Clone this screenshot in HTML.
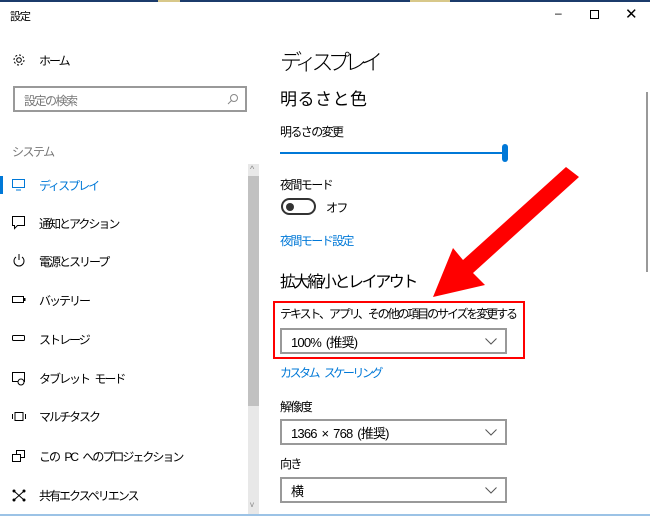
<!DOCTYPE html>
<html><head><meta charset="utf-8"><style>
*{margin:0;padding:0;box-sizing:border-box}
body{width:650px;height:516px;overflow:hidden;background:#fff;font-family:"Liberation Sans","Noto Sans CJK JP",sans-serif;color:#000;position:relative}
.a{position:absolute;white-space:nowrap}
.t{font-size:12px;letter-spacing:-1.6px;word-spacing:3px}
.nav{font-size:12px;left:39px;letter-spacing:-2px;word-spacing:4px}
.ic{position:absolute;left:12px}
.dd{position:absolute;left:280px;width:227px;height:26px;border:2px solid #999;font-size:13px;padding:2px 0 0 9px;letter-spacing:-0.8px;word-spacing:2px}
.dd svg{position:absolute;right:8px;top:8px}
</style></head><body>
<div class="a" style="left:0;top:0;width:650px;height:2px;background:#1b3b6b"></div>
<div class="a" style="left:158px;top:0;width:22px;height:2px;background:#d8c88a"></div>
<div class="a" style="left:410px;top:0;width:40px;height:2px;background:#d8c88a"></div>
<div class="a" style="left:10px;top:8px;font-size:11px;letter-spacing:-1px">設定</div>
<div class="a" style="left:555px;top:6px;font-size:12px">&#8211;</div>
<div class="a" style="left:590px;top:10px;width:9px;height:9px;border:1px solid #000"></div>
<div class="a" style="left:625px;top:5px;font-size:15px">✕</div>

<svg class="a" style="left:12px;top:53px" width="14" height="14" viewBox="0 0 14 14"><circle cx="7" cy="7" r="2.3" fill="none" stroke="#000"/><circle cx="7" cy="7" r="5" fill="none" stroke="#000" stroke-dasharray="2 1.9"/></svg>
<div class="a nav" style="top:52px">ホーム</div>
<div class="a" style="left:13px;top:86px;width:234px;height:26px;border:2px solid #999;font-size:12px;letter-spacing:-1.5px;color:#777;padding:4px 0 0 9px">設定の検索
<svg style="position:absolute;right:6px;top:5px" width="12" height="12"><circle cx="7" cy="5" r="3.5" fill="none" stroke="#888"/><line x1="4.5" y1="7.5" x2="1" y2="11" stroke="#888"/></svg></div>
<div class="a" style="left:12px;top:143px;font-size:12px;letter-spacing:-1.5px;color:#777">システム</div>

<div class="a" style="left:0;top:176px;width:3px;height:18px;background:#0078d7"></div>
<svg class="ic" style="top:179px" width="13" height="12"><rect x="0.5" y="0.5" width="12" height="8" fill="none" stroke="#0078d7"/><line x1="4" y1="11" x2="9" y2="11" stroke="#0078d7"/></svg>
<div class="a nav" style="top:177px;color:#0078d7">ディスプレイ</div>
<svg class="ic" style="top:216px" width="14" height="14"><path d="M0.5 0.5h12v9h-7l-3 3v-3h-2z" fill="none" stroke="#000"/></svg>
<div class="a nav" style="top:215px">通知とアクション</div>
<svg class="ic" style="top:254px" width="14" height="14"><path d="M4 3A5 5 0 1 0 10 3" fill="none" stroke="#000"/><line x1="7" y1="0" x2="7" y2="6" stroke="#000"/></svg>
<div class="a nav" style="top:253px">電源とスリープ</div>
<svg class="ic" style="top:296px" width="14" height="8"><rect x="0.5" y="0.5" width="11" height="6" fill="none" stroke="#000"/><rect x="12" y="2" width="1.5" height="3" fill="#000"/></svg>
<div class="a nav" style="top:292px">バッテリー</div>
<svg class="ic" style="top:335px" width="14" height="7"><rect x="0.5" y="0.5" width="12" height="5" rx="1" fill="none" stroke="#000"/></svg>
<div class="a nav" style="top:331px">ストレージ</div>
<svg class="ic" style="top:372px" width="14" height="14"><rect x="0.5" y="0.5" width="12" height="9" fill="none" stroke="#000"/><circle cx="9" cy="10" r="3" fill="#fff" stroke="#000"/></svg>
<div class="a nav" style="top:370px">タブレット モード</div>
<svg class="ic" style="top:412px" width="14" height="10"><rect x="3" y="0.5" width="8" height="8" fill="none" stroke="#000"/><line x1="0.5" y1="2" x2="0.5" y2="7" stroke="#000"/><line x1="13.5" y1="2" x2="13.5" y2="7" stroke="#000"/></svg>
<div class="a nav" style="top:408px">マルチタスク</div>
<svg class="ic" style="top:450px" width="14" height="13"><rect x="4.5" y="0.5" width="8" height="7" fill="none" stroke="#000"/><rect x="0.5" y="4.5" width="8" height="7" fill="#fff" stroke="#000"/></svg>
<div class="a nav" style="top:448px">この PC へのプロジェクション</div>
<svg class="ic" style="top:489px" width="14" height="13"><path d="M2 2L12 11M12 2L2 11" stroke="#000"/><circle cx="2" cy="2" r="1.5"/><circle cx="12" cy="2" r="1.5"/><circle cx="2" cy="11" r="1.5"/><circle cx="12" cy="11" r="1.5"/></svg>
<div class="a nav" style="top:487px">共有エクスペリエンス</div>

<div class="a" style="left:248px;top:164px;width:11px;height:350px;background:#e8e8e8"></div>
<div class="a" style="left:248px;top:176px;width:11px;height:230px;background:#c1c1c1"></div>
<div class="a" style="left:250px;top:164px;font-size:9px;color:#888">^</div>
<div class="a" style="left:250px;top:500px;font-size:8px;color:#888">v</div>
<div class="a" style="left:646px;top:92px;width:2px;height:180px;background:#999"></div>

<div class="a" style="left:280px;top:45px;font-size:22px;font-weight:300;letter-spacing:-5.5px">ディスプレイ</div>
<div class="a" style="left:280px;top:85px;font-size:17px;letter-spacing:0.5px">明るさと色</div>
<div class="a t" style="left:280px;top:123px">明るさの変更</div>
<div class="a" style="left:280px;top:152px;width:224px;height:2px;background:#0078d7"></div>
<div class="a" style="left:502px;top:144px;width:6px;height:18px;border-radius:3px;background:#0078d7"></div>
<div class="a t" style="left:280px;top:176px">夜間モード</div>
<div class="a" style="left:281px;top:198px;width:35px;height:17px;border:2px solid #333;border-radius:9px"></div>
<div class="a" style="left:286px;top:203px;width:8px;height:8px;border-radius:4px;background:#333"></div>
<div class="a t" style="left:326px;top:199px">オフ</div>
<div class="a t" style="left:280px;top:232px;color:#0078d7">夜間モード設定</div>
<div class="a" style="left:280px;top:268px;font-size:16px;letter-spacing:-2.4px">拡大縮小とレイアウト</div>
<div class="a" style="left:273px;top:301px;width:252px;height:58px;border:2px solid #f00"></div>
<div class="a t" style="left:280px;top:305px;letter-spacing:-2.1px">テキスト、アプリ、その他の項目のサイズを変更する</div>
<div class="dd" style="top:328px">100% (推奨)<svg width="12" height="7"><path d="M0.5 0.5L6 6L11.5 0.5" fill="none" stroke="#555"/></svg></div>
<div class="a t" style="left:280px;top:364px;color:#0078d7;letter-spacing:-2.5px;word-spacing:5px">カスタム スケーリング</div>
<div class="a t" style="left:280px;top:398px">解像度</div>
<div class="dd" style="top:419px">1366 × 768 (推奨)<svg width="12" height="7"><path d="M0.5 0.5L6 6L11.5 0.5" fill="none" stroke="#555"/></svg></div>
<div class="a t" style="left:280px;top:455px">向き</div>
<div class="dd" style="top:477px">横<svg width="12" height="7"><path d="M0.5 0.5L6 6L11.5 0.5" fill="none" stroke="#555"/></svg></div>

<svg class="a" style="left:0;top:0" width="650" height="516"><polygon points="566,167 579,177 473,273 485,285 433,297 453,248 463,260" fill="#f00"/></svg>
<div class="a" style="left:0;top:514px;width:650px;height:2px;background:#9cc3e6"></div>
</body></html>
